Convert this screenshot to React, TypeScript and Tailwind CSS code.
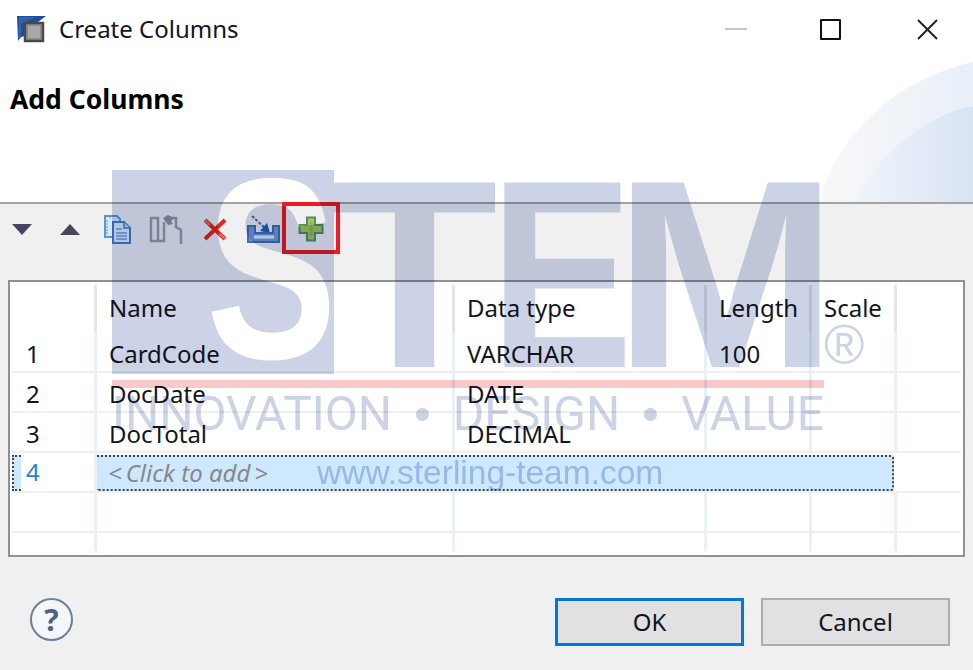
import React from "react";

const rows = [
  { n: "1", name: "CardCode", type: "VARCHAR", length: "100" },
  { n: "2", name: "DocDate", type: "DATE", length: "" },
  { n: "3", name: "DocTotal", type: "DECIMAL", length: "" },
];

const line = "border-r-[3px] border-[#e9f0f9]";
const headCell = "flex h-[48px] items-center border-r-[3px] border-[#e6e6e6] pb-[2px] pl-[12px]";
const rowLine = "ml-[2px] mr-[2px] flex h-[40px] items-center border-b-2 border-[#efefef]";

function CopyIcon() {
  return (
    <svg width="30" height="31" viewBox="0 0 30 31">
      <path d="M2 2h12l3 3v18H2z" fill="#d8e8f8" stroke="#5b97d8" strokeWidth="2" />
      <path d="M4 6v14M7 2v2" stroke="#5b97d8" strokeWidth="1" strokeDasharray="2 1" />
      <path d="M10 8h11l6 6v15H10z" fill="#e4eef9" stroke="#3f7fc4" strokeWidth="2" />
      <path d="M21 8v6h6" fill="#bcd4ee" stroke="#3f7fc4" strokeWidth="1.5" />
      <path d="M13 15h6M13 19h11M13 22h11M13 25h11" stroke="#6b9fd4" strokeWidth="1.5" />
    </svg>
  );
}

function PasteIcon() {
  return (
    <svg width="34" height="31" viewBox="0 0 34 31">
      <path d="M2 4h7v23H2z" fill="none" stroke="#9a9da6" strokeWidth="2.500" />
      <path d="M9 27h6V8M20 4h7v9l5 3v14" fill="none" stroke="#9a9da6" strokeWidth="2.500" />
      <path d="M14 4l5-3 6 3-3 3 2 3-5 1-3-4z" fill="#8f929c" />
    </svg>
  );
}

function DeleteIcon() {
  return (
    <svg width="26" height="25" viewBox="0 0 26 25">
      <path d="M3 3l20 19M23 3L3 22" stroke="#e8261c" strokeWidth="4" />
      <path d="M3 3l5 5M18 17l5 5" stroke="#c99a90" strokeWidth="2" opacity="0.7" />
    </svg>
  );
}

function ImportIcon() {
  return (
    <svg width="35" height="30" viewBox="0 0 35 30">
      <path d="M6 2l14 13" stroke="#3d6fb0" strokeWidth="2" strokeDasharray="3 1.5" />
      <path d="M24 19l-10-2 7-8z" fill="#1f5fae" />
      <path d="M2 12h7v7h18v-7h6v16H2z" fill="#6f9bd1" stroke="#3f6fae" strokeWidth="2" />
      <path d="M8 23h20" stroke="#e8eff8" strokeWidth="3" />
    </svg>
  );
}

function AddIcon() {
  return (
    <svg width="26" height="26" viewBox="0 0 26 26">
      <path d="M9 1.500h8v7.500h7.500v8H17v7.500H9V17H1.500V9H9z" fill="#a9c65c" stroke="#4f8f6a" strokeWidth="2" />
      <path d="M13 6v14" stroke="#8db85a" strokeWidth="3" />
    </svg>
  );
}

function AppIcon() {
  return (
    <svg width="30" height="30" viewBox="0 0 30 30">
      <path d="M1 2h29l-8 6H9v14l-4 1-3 4z" fill="#1f4f96" />
      <path d="M3 3h18l-10 4-6 3v12l-3 3z" fill="#2c64b4" />
      <rect x="9" y="9" width="18" height="18" fill="#8c8c8c" stroke="#4a4a4a" strokeWidth="2.500" />
      <rect x="12" y="12" width="12" height="12" fill="#a8a8a8" />
    </svg>
  );
}

function Watermark() {
  const stem = "absolute leading-none font-bold text-[#ccd3e6] top-[140px] text-[268px]";
  return (
    <div className="pointer-events-none absolute inset-0 overflow-hidden mix-blend-multiply [font-family:'Liberation_Sans',sans-serif]">
      <div className="absolute left-[112px] top-[170px] h-[204px] w-[222px] overflow-hidden bg-[#ccd3e6]">
        <span className="absolute left-[94px] top-[-30px] origin-left scale-x-[0.76] text-[258px] font-bold leading-none text-white">
          S
        </span>
      </div>
      <span className={`${stem} left-[331px] origin-left scale-x-[1.02]`}>T</span>
      <span className={`${stem} left-[490px] origin-left scale-x-[0.8]`}>E</span>
      <span className={`${stem} left-[614px] origin-left`}>M</span>
      <span className="absolute left-[824px] top-[318px] text-[55px] leading-none text-[#ccd3e6]">®</span>
      <div className="absolute left-[112px] top-[380px] h-[8px] w-[712px] bg-[#f9c8c8]" />
      <div className="absolute left-[112px] top-[386px] flex h-[56px] w-[712px] items-center justify-between text-[48px] leading-none text-[#ccd3e6] [font-family:Roboto,sans-serif]">
        <span>INNOVATION</span>
        <span className="[font-family:'Liberation_Sans',sans-serif]">•</span>
        <span>DESIGN</span>
        <span className="[font-family:'Liberation_Sans',sans-serif]">•</span>
        <span>VALUE</span>
      </div>
      <div className="absolute left-[317px] top-[453px] text-[33.500px] leading-[40px] text-[#bccbea]">
        www.sterling-team.com
      </div>
    </div>
  );
}

export default function App() {
  return (
    <div className="relative h-[670px] w-[973px] overflow-hidden bg-[#f0f0f0] text-[24px] text-[#14141e] [font-family:'Noto_Sans',sans-serif]">
      {/* HEADER */}
      <div className="relative h-[202px] bg-white">
        <svg className="absolute bottom-0 right-0" width="160" height="142" viewBox="0 0 160 142">
          <defs>
            <linearGradient id="g1" x1="0" x2="1" y1="0" y2="0">
              <stop offset="0" stopColor="#f8f8f8" />
              <stop offset="1" stopColor="#e8eff9" />
            </linearGradient>
            <linearGradient id="g2" x1="0" x2="1" y1="0" y2="0">
              <stop offset="0" stopColor="#f0f4fb" />
              <stop offset="1" stopColor="#d8e4f3" />
            </linearGradient>
          </defs>
          <path d="M7 142C20 80 80 20 160 2v140z" fill="url(#g1)" />
          <path d="M42 142C60 100 110 55 160 46v96z" fill="url(#g2)" />
        </svg>
        <div className="relative flex h-[58px] items-center">
          <div className="ml-[16px] flex w-[43px]">
            <AppIcon />
          </div>
          <span className="flex-1">Create Columns</span>
          <div className="mr-[73px] h-[2px] w-[22px] bg-[#c8c8c8]" />
          <div className="mr-[76px] h-[21px] w-[21px] rounded-[1px] border-[2.5px] border-[#111]" />
          <svg className="mr-[35px]" width="21" height="21" viewBox="0 0 21 21">
            <path d="M1 1l19 19M20 1L1 20" stroke="#222" strokeWidth="2" />
          </svg>
        </div>
        <div className="relative ml-[10px] mt-[23px] text-[26.500px] font-bold leading-[36px] text-black">Add Columns</div>
      </div>

      {/* TOOLBAR */}
      <div className="relative h-[78px] border-t-2 border-[#a3a3a3]">
        <div className="flex h-[50px] items-center pl-[12px]">
          <div className="mr-[28px] h-0 w-0 border-x-[10px] border-t-[11px] border-x-transparent border-t-[#45455f]" />
          <div className="mr-[23px] h-0 w-0 border-x-[10px] border-b-[11px] border-x-transparent border-b-[#45455f]" />
          <div className="mr-[16px]"><CopyIcon /></div>
          <div className="mr-[19px]"><PasteIcon /></div>
          <div className="mr-[18px]"><DeleteIcon /></div>
          <div className="mr-[17px]"><ImportIcon /></div>
          <AddIcon />
        </div>
        {/* highlight round the add button */}
        <div className="absolute left-[282px] top-[-2px] h-[52px] w-[58px] border-[4px] border-[#ed1c24]" />
      </div>

      {/* TABLE */}
      <div className="mx-[8px] h-[277px] w-[957px] border-2 border-[#8f9194] bg-white">
        <div className="ml-[2px] flex h-[51px] items-end">
          <div className="h-[48px] w-[85px] border-r-[3px] border-[#e6e6e6]" />
          <div className={`${headCell} w-[358px]`}>Name</div>
          <div className={`${headCell} w-[252px]`}>Data type</div>
          <div className={`${headCell} w-[105px]`}>Length</div>
          <div className={`${headCell} w-[85px]`}>Scale</div>
        </div>

        {rows.map((r) => (
          <div key={r.n} className={rowLine}>
            <div className={`flex h-full w-[85px] items-center ${line} pl-[14px] pt-[3px]`}>{r.n}</div>
            <div className={`flex h-full w-[358px] items-center ${line} pl-[12px] pt-[3px]`}>{r.name}</div>
            <div className={`flex h-full w-[252px] items-center ${line} pl-[12px] pt-[3px]`}>{r.type}</div>
            <div className={`flex h-full w-[105px] items-center ${line} pl-[12px] pt-[3px]`}>{r.length}</div>
            <div className={`h-full w-[85px] ${line}`} />
          </div>
        ))}

        {/* selected row */}
        <div className={rowLine}>
          <div className={`flex h-full w-[85px] items-center ${line} text-[#2a7fd4]`}>
            <div className="mr-[5px] h-[36px] w-[9px] self-end border-y-2 border-l-2 border-dotted border-[#444] bg-[#cde8ff]" />
            4
          </div>
          <div className="flex h-[36px] w-[797px] items-center self-end rounded-r-[3px] border-y-2 border-r-2 border-dotted border-[#444] bg-[#cde8ff] pl-[11px] italic text-[#888]">
            <span className="mr-[4px]">&lt;</span>Click to add<span className="ml-[4px]">&gt;</span>
          </div>
        </div>

        <div className={rowLine}>
          <div className={`h-full w-[85px] ${line}`} />
          <div className={`h-full w-[358px] ${line}`} />
          <div className={`h-full w-[252px] ${line}`} />
          <div className={`h-full w-[105px] ${line}`} />
          <div className={`h-full w-[85px] ${line}`} />
        </div>
        <div className="ml-[2px] flex h-[18px]">
          <div className={`w-[85px] ${line}`} />
          <div className={`w-[358px] ${line}`} />
          <div className={`w-[252px] ${line}`} />
          <div className={`w-[105px] ${line}`} />
          <div className={`w-[85px] ${line}`} />
        </div>
      </div>

      {/* FOOTER */}
      <div className="flex items-start pt-[41px]">
        <div className="ml-[30px] flex h-[43px] w-[43px] items-center justify-center rounded-full border-2 border-[#6d7f9b] bg-[#f4f6f9] text-[30px] font-bold leading-none text-[#4f6484]">
          ?
        </div>
        <button className="ml-[482px] h-[48px] w-[189px] border-[3px] border-[#0078d7] bg-[#e1e1e1]">OK</button>
        <button className="ml-[17px] h-[48px] w-[189px] border-2 border-[#adadad] bg-[#e1e1e1]">Cancel</button>
      </div>

      <Watermark />
    </div>
  );
}
